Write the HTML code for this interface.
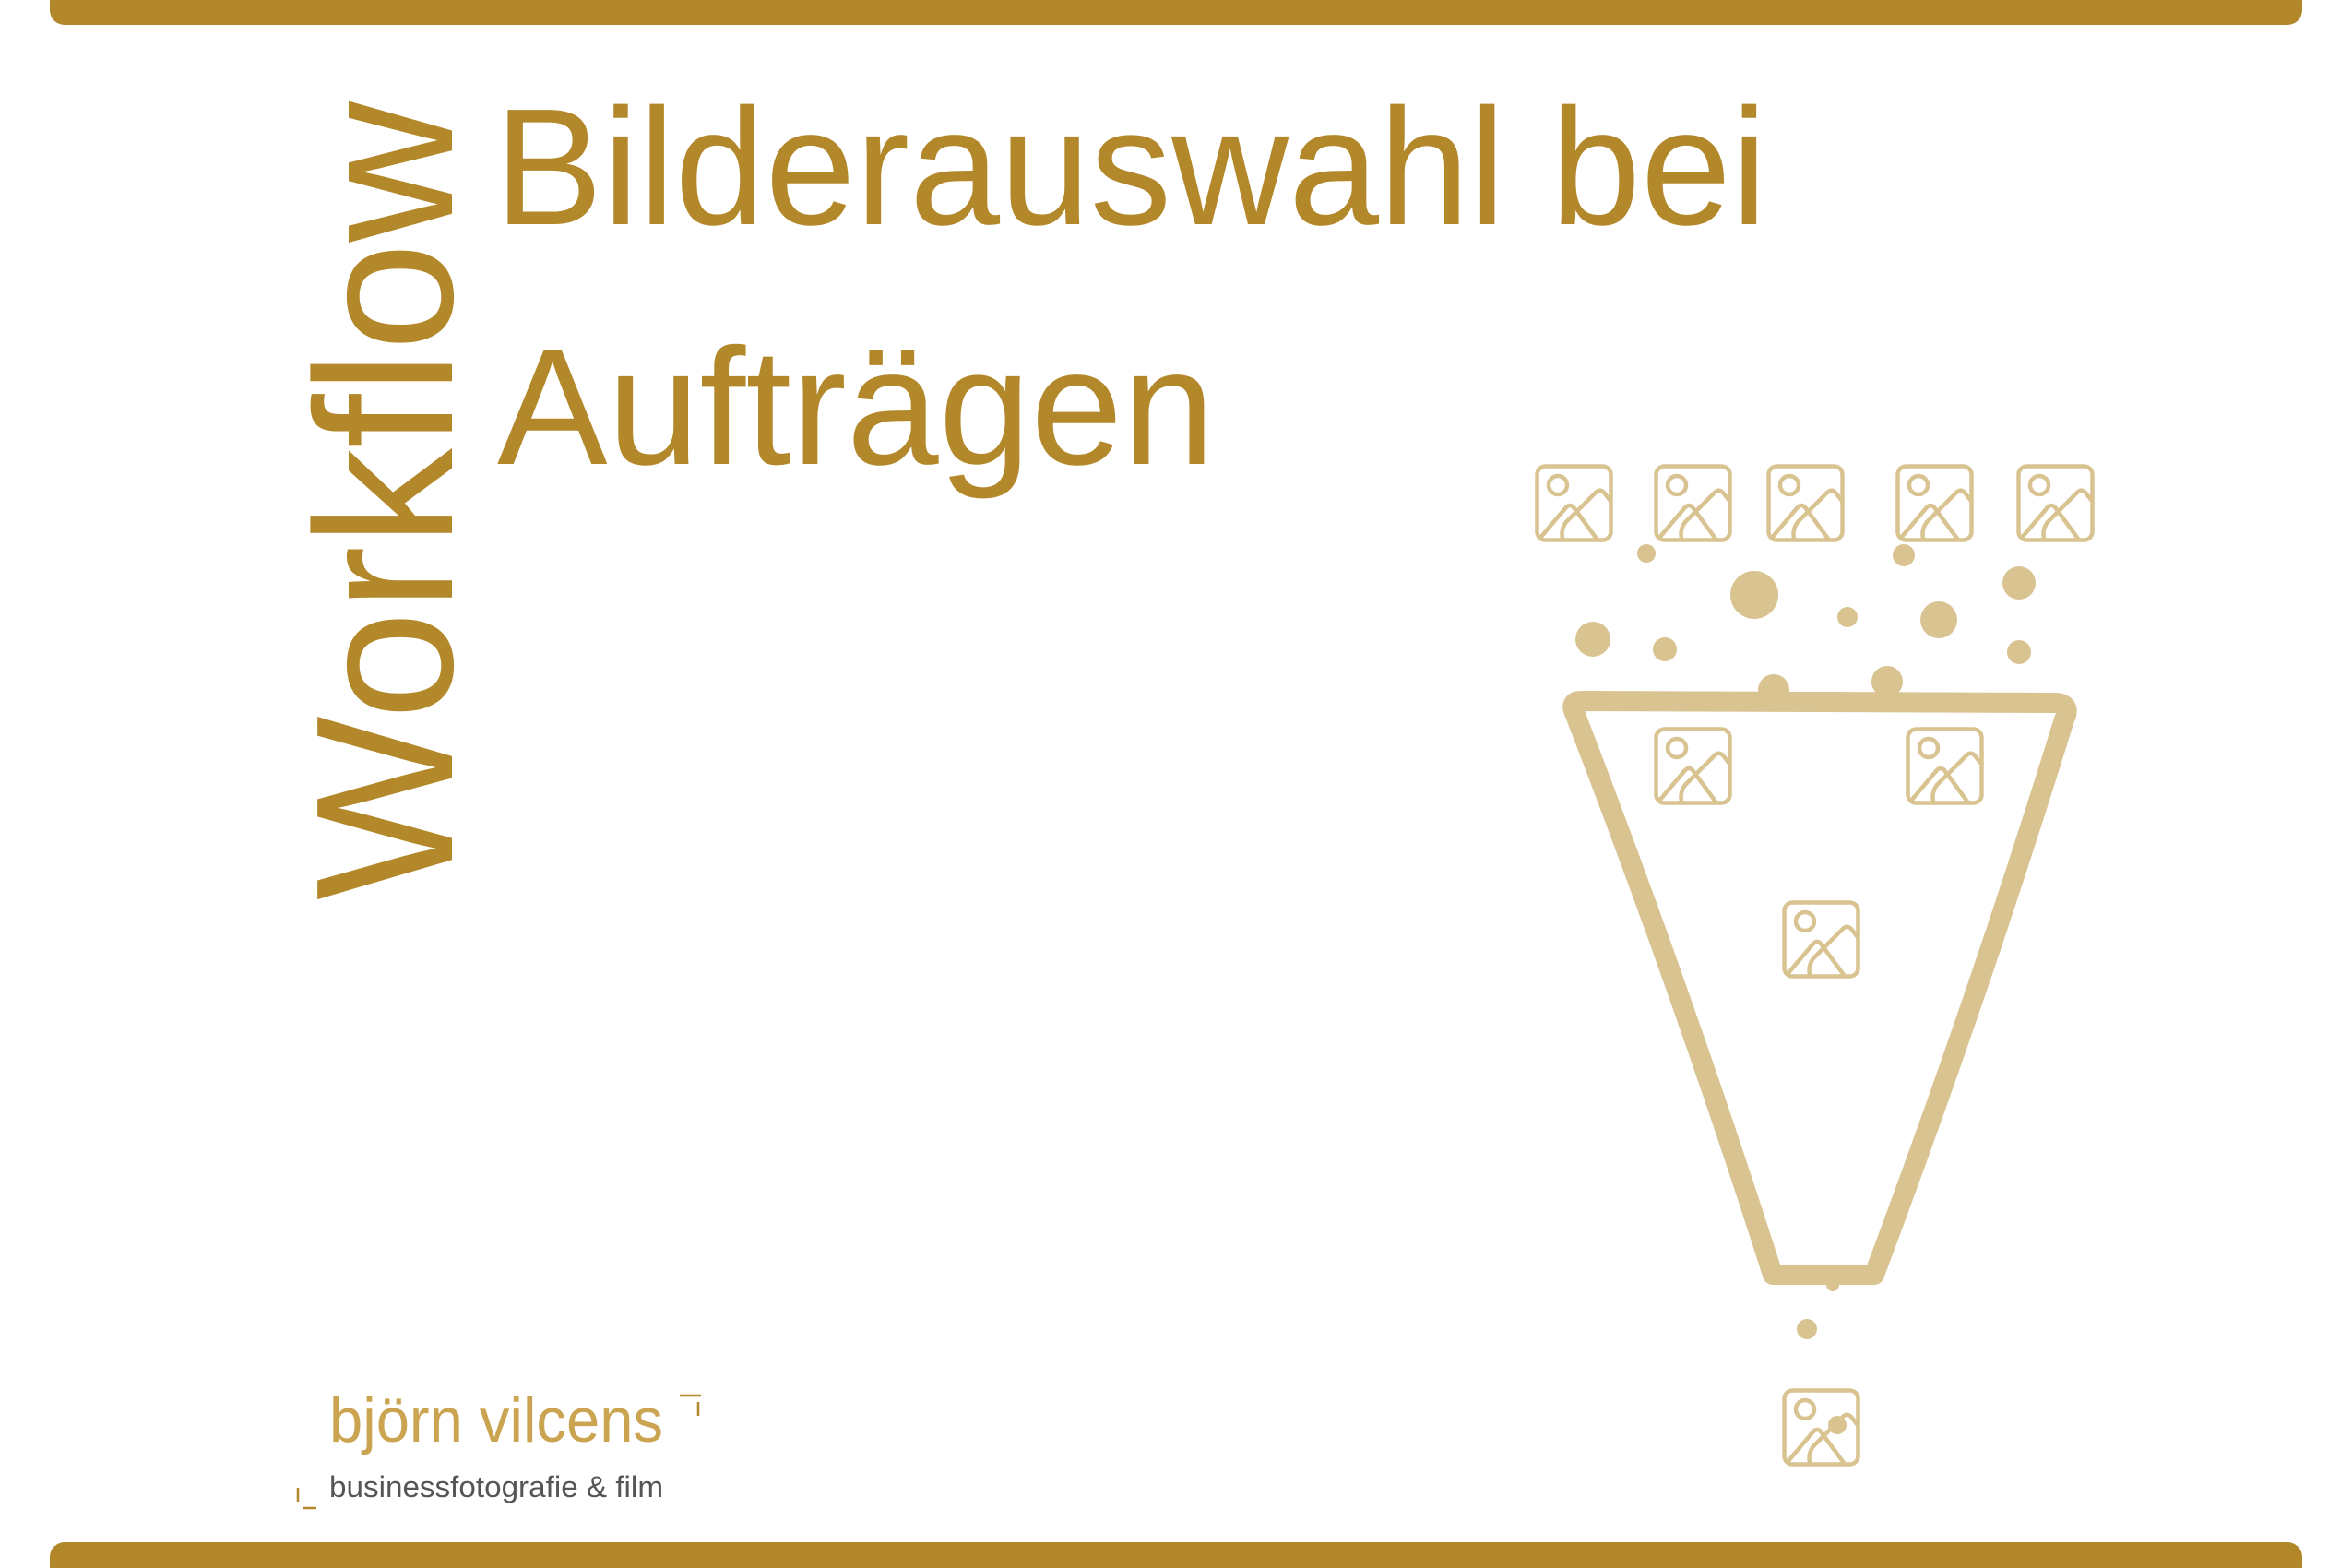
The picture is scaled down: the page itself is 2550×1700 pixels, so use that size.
<!DOCTYPE html>
<html><head><meta charset="utf-8"><style>html,body{margin:0;padding:0;background:#fff}svg{display:block}</style></head>
<body>
<svg width="2550" height="1700" viewBox="0 0 2550 1700" xmlns="http://www.w3.org/2000/svg">
<defs>
<g id="ic" fill="none" stroke="#D8C391" stroke-width="4.5" stroke-linecap="round" stroke-linejoin="round">
<rect x="2.5" y="2.5" width="80" height="80" rx="9"/>
<circle cx="25" cy="23" r="10"/>
<path d="M6 80 L34 47 Q38 43 42 47 L67 81"/>
<path d="M30 81 Q28 71 34 63 L67 30 Q71 27 75 31 L82 40"/>
</g>
</defs>
<rect x="54" y="-20" width="2442" height="47" rx="16" fill="#B2872A"/>
<rect x="54" y="1672" width="2442" height="60" rx="16" fill="#B2872A"/>
<g fill="#B3882A" font-family="Liberation Sans, Arial, sans-serif">
<text x="536" y="243" font-size="180" textLength="1380" lengthAdjust="spacingAndGlyphs">Bilderauswahl bei</text>
<text x="539" y="503" font-size="180" textLength="778" lengthAdjust="spacingAndGlyphs">Aufträgen</text>
<text transform="translate(490,976) rotate(-90)" font-size="212" textLength="866" lengthAdjust="spacingAndGlyphs">Workflow</text>
</g>
<use href="#ic" x="1664" y="503"/>
<use href="#ic" x="1793" y="503"/>
<use href="#ic" x="1915" y="503"/>
<use href="#ic" x="2055" y="503"/>
<use href="#ic" x="2186" y="503"/>
<use href="#ic" x="1793" y="788"/>
<use href="#ic" x="2066" y="788"/>
<use href="#ic" x="1932" y="976"/>
<use href="#ic" x="1932" y="1505"/>
<g fill="#D8C391">
<circle cx="1785" cy="600" r="10"/>
<circle cx="1902" cy="645" r="26"/>
<circle cx="2064" cy="602" r="12"/>
<circle cx="2189" cy="632" r="18"/>
<circle cx="2003" cy="669" r="11"/>
<circle cx="2102" cy="672" r="20"/>
<circle cx="1727" cy="693" r="19"/>
<circle cx="1805" cy="704" r="13"/>
<circle cx="2189" cy="707" r="13"/>
<circle cx="1923" cy="748" r="17"/>
<circle cx="2046" cy="739" r="17"/>
<circle cx="1987" cy="1393" r="7"/>
<circle cx="1959" cy="1441" r="11"/>
<circle cx="1992" cy="1545" r="10"/>
</g>
<path d="M1922 1382 Q1826 1081 1708 775 Q1700 760 1715 760 L2230 762 Q2246 764 2238 780 Q2145 1081 2032 1382 Z" fill="none" stroke="#D8C391" stroke-width="22" stroke-linejoin="round"/>
<g font-family="Liberation Sans, Arial, sans-serif">
<text x="357" y="1563" font-size="68" fill="#CBA452" font-weight="300" textLength="362" lengthAdjust="spacingAndGlyphs">björn vilcens</text>
<text x="357" y="1623" font-size="32" fill="#555" textLength="362" lengthAdjust="spacingAndGlyphs">businessfotografie &amp; film</text>
</g>
<g stroke="#B3882A" stroke-width="2.5" fill="none">
<path d="M737 1513 H760 M757 1520 V1535"/>
<path d="M323 1613 V1628 M328 1635 H343"/>
</g>
</svg>
</body></html>
